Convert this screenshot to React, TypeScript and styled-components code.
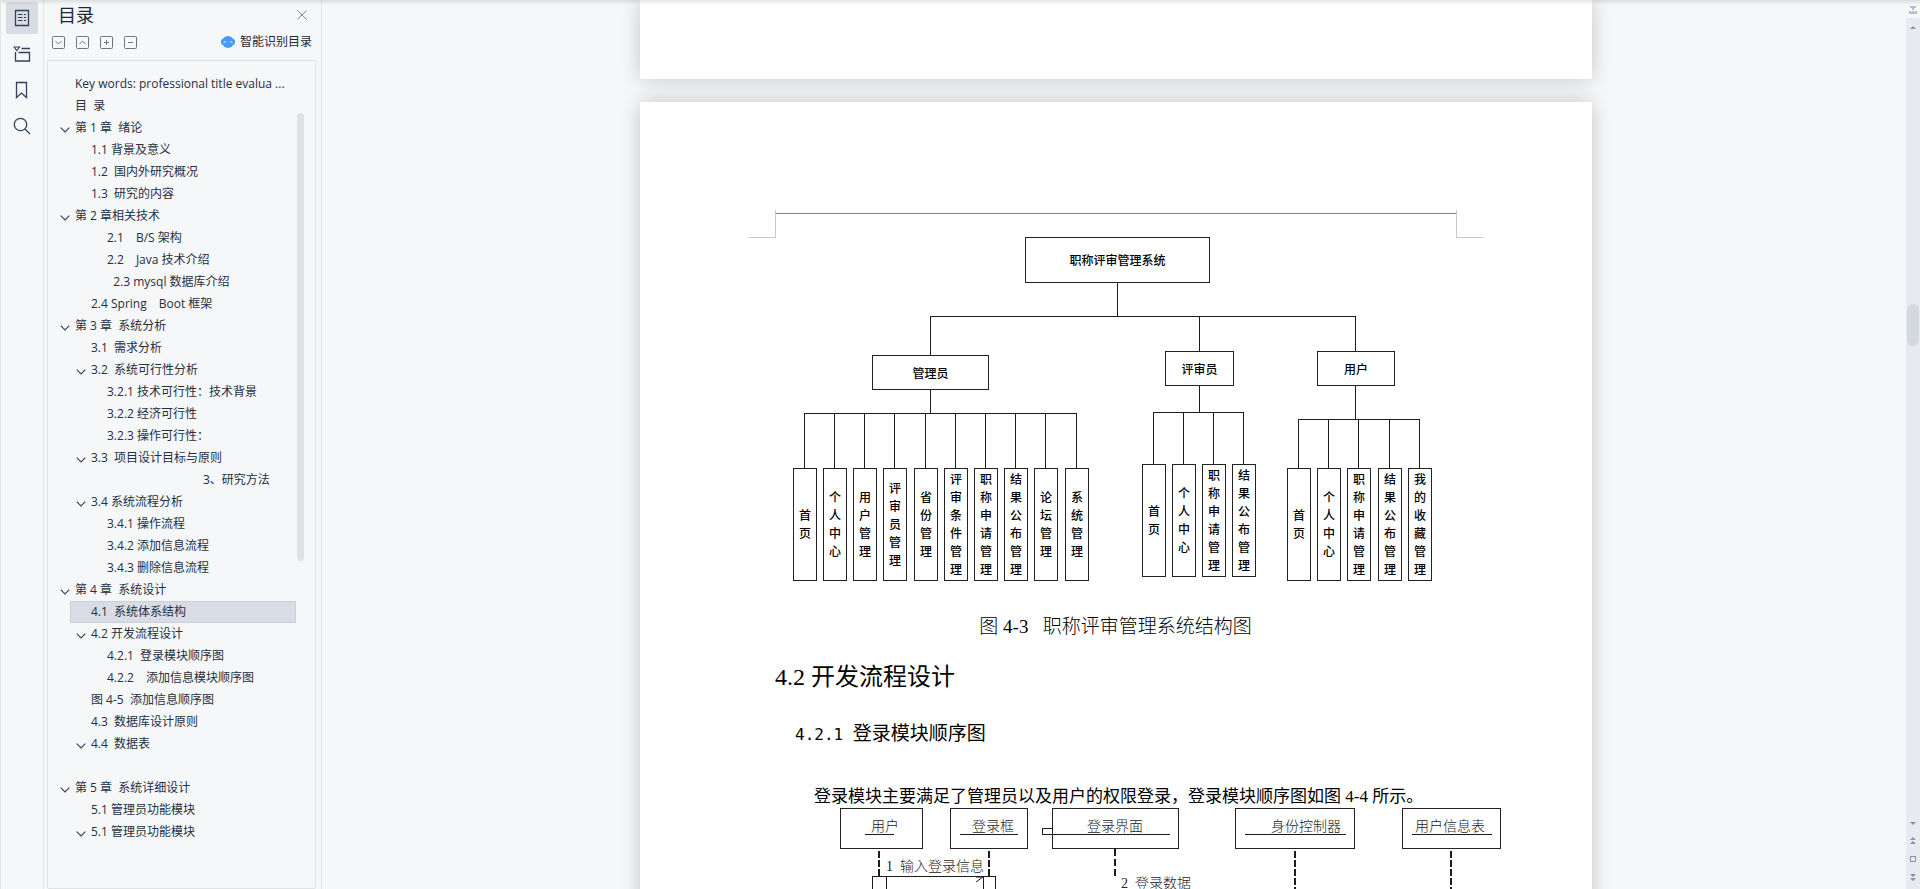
import React from "react";
import styled, { createGlobalStyle } from "styled-components";

const GlobalStyle = createGlobalStyle`
  * { box-sizing: border-box; }
  html, body, #root { height: 100%; }
  body {
    margin: 0;
    background: #f5f7f9;
    color: #262f3f;
    font-family: "Open Sans", "Noto Sans CJK SC", sans-serif;
    font-size: 12px;
  }
  h1, h2, h3, p, ul, figure { margin: 0; padding: 0; font-weight: 400; }
  ul { list-style: none; }
  button { border: 0; padding: 0; background: none; color: inherit; font: inherit; cursor: pointer; }
  svg { display: block; }
`;

const Shell = styled.div`
  position: relative;
  display: flex;
  height: 100vh;
  overflow: hidden;
  border-left: 1px solid #e2e4e8;

  &::after {
    content: "";
    position: absolute;
    inset: 0 0 auto;
    height: 5px;
    background: linear-gradient(rgba(0, 0, 0, 0.1), rgba(0, 0, 0, 0));
    pointer-events: none;
  }
`;

/* ---------- left rail ---------- */

const Rail = styled.nav`
  display: flex;
  flex: none;
  flex-direction: column;
  gap: 4px;
  width: 43px;
  padding: 2px 5px;
  border-right: 1px solid #e2e4e8;
`;

const RailButton = styled.button<{ $active?: boolean }>`
  display: grid;
  place-items: center;
  width: 32px;
  height: 32px;
  border-radius: 2px;
  background: ${(p) => (p.$active ? "#d8dde4" : "transparent")};
`;

/* ---------- contents panel ---------- */

const Panel = styled.aside`
  display: flex;
  flex: none;
  flex-direction: column;
  width: 278px;
  padding: 0 5px 0 3px;
  border-right: 1px solid #e2e4e8;
`;

const PanelHeader = styled.header`
  display: flex;
  align-items: center;
  justify-content: space-between;
  height: 30px;
  padding: 0 9px 0 11px;
`;

const PanelTitle = styled.h1`
  font-size: 18px;
  line-height: 30px;
  color: #1f2733;
`;

const PanelTools = styled.div`
  display: flex;
  align-items: center;
  gap: 11px;
  height: 24px;
  margin-bottom: 6px;
  padding: 0 4px 0 5px;
`;

const ToolButton = styled.button`
  width: 13px;
  height: 13px;
`;

const SmartButton = styled.button`
  display: flex;
  align-items: center;
  gap: 5px;
  margin-left: auto;
  line-height: 24px;
  color: #1f2733;
`;

const TreeFrame = styled.div`
  display: flex;
  flex: 1;
  min-height: 0;
  padding: 12px 11px 0 6px;
  border: 1px solid #e0e3e6;
  border-radius: 2px;
`;

const Tree = styled.ul`
  flex: 1;
  min-width: 0;
  overflow: hidden;
`;

const TreeRow = styled.li<{ $level: number; $current?: boolean }>`
  display: flex;
  align-items: center;
  height: 22px;
  margin-left: ${(p) => p.$level * 16}px;
  margin-right: 1px;
  border: 1px solid ${(p) => (p.$current ? "#c9d0d9" : "transparent")};
  background: ${(p) => (p.$current ? "#d8dde5" : "transparent")};
`;

const ChevronSlot = styled.button`
  display: flex;
  flex: none;
  justify-content: center;
  width: 20px;
  padding-top: 3px;
`;

const Spacer = styled.span`
  flex: none;
  width: 20px;
`;

const TreeLink = styled.a`
  overflow: hidden;
  color: inherit;
  line-height: 20px;
  text-decoration: none;
  text-overflow: ellipsis;
  white-space: pre;
`;

const TreeScroll = styled.div`
  flex: none;
  width: 7px;
  height: 448px;
  margin-top: 40px;
  border-radius: 4px;
  background: #dfe2e4;
`;

/* ---------- document ---------- */

const Desk = styled.main`
  display: flex;
  flex: 1;
  flex-direction: column;
  align-items: center;
  gap: 23px;
  min-width: 0;
  padding-left: 4px;
  overflow: hidden;
`;

const Sheet = styled.article`
  flex: none;
  width: 952px;
  padding: 108px 136px 96px 135px;
  background: #fff;
  box-shadow: 0 0 20px rgba(0, 0, 0, 0.2);
  color: #000;
  font-family: "Liberation Serif", "Noto Sans CJK SC", serif;
`;

const SheetTail = styled(Sheet)`
  height: 79px;
  padding: 0;
`;

const HeaderRule = styled.div`
  display: grid;
  grid-template-columns: 28px 1fr 28px;
  height: 28px;
  margin: 0 -28px -1px -27px;
`;

const Corner = styled.span<{ $side: "left" | "right" }>`
  border-bottom: 1px solid #c8c8c8;
  border-${(p) => (p.$side === "left" ? "right" : "left")}: 1px solid #c8c8c8;
`;

const Rule = styled.span`
  height: 1px;
  margin-top: 3px;
  background: #808080;
`;

const Chart = styled.figure<{ $height: number }>`
  position: relative;
  height: ${(p) => p.$height}px;
`;

const Wires = styled.svg`
  position: absolute;
  inset: 0;
  overflow: visible;
  fill: none;
  stroke: #1c1c1c;
  shape-rendering: crispEdges;
`;

const Box = styled.div<{ $x: number; $y: number; $w: number; $h: number }>`
  position: absolute;
  left: ${(p) => p.$x}px;
  top: ${(p) => p.$y}px;
  display: flex;
  align-items: center;
  justify-content: center;
  width: ${(p) => p.$w}px;
  height: ${(p) => p.$h}px;
  border: 1px solid #222;
  background: #fff;
  font-size: 12px;
  font-weight: 500;
`;

const Leaf = styled(Box)`
  line-height: 18px;

  span { width: 12px; word-break: break-all; }
`;

const Actor = styled(Box)<{ $pad: number }>`
  align-items: flex-start;
  justify-content: flex-start;
  padding-left: ${(p) => p.$pad}px;
  background: none;
  color: #222;
  font-size: 14px;
  font-weight: 300;
  line-height: 36px;
`;

const Message = styled.span<{ $x: number; $y: number }>`
  position: absolute;
  left: ${(p) => p.$x}px;
  top: ${(p) => p.$y}px;
  color: #222;
  font-size: 14px;
  font-weight: 300;
  line-height: 20px;
  white-space: pre;
`;

const Caption = styled.p`
  font-size: 19px;
  font-weight: 300;
  line-height: 40px;
  text-align: center;
  white-space: pre;
`;

const Section = styled.h2`
  margin-top: 10px;
  font-size: 24px;
  line-height: 40px;
`;

const Subsection = styled.h3`
  margin-top: 17px;
  padding-left: 20px;
  font-size: 19px;
  line-height: 40px;
  white-space: pre;
`;

const Digits = styled.span`
  font-family: "DejaVu Sans Mono", monospace;
  font-size: 16px;
  line-height: 1;
`;

const Paragraph = styled.p`
  margin-top: 31px;
  padding-left: 39px;
  font-size: 17px;
  line-height: 23px;
  white-space: nowrap;
`;

/* ---------- page scroll bar ---------- */

const ScrollColumn = styled.div`
  display: flex;
  flex: none;
  flex-direction: column;
  width: 14px;
`;

const RulerToggle = styled.button`
  display: grid;
  place-items: center;
  height: 18px;
  padding-top: 2px;
`;

const Track = styled.div`
  display: flex;
  flex: 1;
  flex-direction: column;
  align-items: center;
  padding: 8px 0;
  background: #e8eaef;
`;

const TrackSpace = styled.div<{ $grow: number }>`
  flex: ${(p) => p.$grow} 1 0;
`;

const Thumb = styled.div`
  flex: none;
  width: 12px;
  height: 42px;
  border-radius: 6px;
  background: #d4d8df;
`;

const GlyphButton = styled.button`
  display: block;
`;

const JumpButtons = styled.div`
  display: flex;
  flex-direction: column;
  gap: 12px;
  padding-top: 12px;
`;

/* ---------- data ---------- */

type Entry = { text: string; level: number; open?: boolean; current?: boolean };

const entries: Entry[] = [
  { text: "Key words: professional title evalua ...", level: 0 },
  { text: "目  录", level: 0 },
  { text: "第 1 章  绪论", level: 0, open: true },
  { text: "1.1 背景及意义", level: 1 },
  { text: "1.2  国内外研究概况", level: 1 },
  { text: "1.3  研究的内容", level: 1 },
  { text: "第 2 章相关技术", level: 0, open: true },
  { text: "2.1\u3000B/S 架构", level: 2 },
  { text: "2.2\u3000Java 技术介绍", level: 2 },
  { text: "  2.3 mysql 数据库介绍", level: 2 },
  { text: "2.4 Spring\u3000Boot 框架", level: 1 },
  { text: "第 3 章  系统分析", level: 0, open: true },
  { text: "3.1  需求分析", level: 1 },
  { text: "3.2  系统可行性分析", level: 1, open: true },
  { text: "3.2.1 技术可行性：技术背景", level: 2 },
  { text: "3.2.2 经济可行性", level: 2 },
  { text: "3.2.3 操作可行性：", level: 2 },
  { text: "3.3  项目设计目标与原则", level: 1, open: true },
  { text: "\u3000\u3000\u3000\u3000\u3000\u3000\u3000\u30003、研究方法", level: 2 },
  { text: "3.4 系统流程分析", level: 1, open: true },
  { text: "3.4.1 操作流程", level: 2 },
  { text: "3.4.2 添加信息流程", level: 2 },
  { text: "3.4.3 删除信息流程", level: 2 },
  { text: "第 4 章  系统设计", level: 0, open: true },
  { text: "4.1  系统体系结构", level: 1, current: true },
  { text: "4.2 开发流程设计", level: 1, open: true },
  { text: "4.2.1  登录模块顺序图", level: 2 },
  { text: "4.2.2\u3000添加信息模块顺序图", level: 2 },
  { text: "图 4-5  添加信息顺序图", level: 1 },
  { text: "4.3  数据库设计原则", level: 1 },
  { text: "4.4  数据表", level: 1, open: true },
  { text: "", level: 1 },
  { text: "第 5 章  系统详细设计", level: 0, open: true },
  { text: "5.1 管理员功能模块", level: 1 },
  { text: "5.1 管理员功能模块", level: 1, open: true },
];

type Branch = {
  name: string;
  x: number;
  y: number;
  w: number;
  stem: number;
  bar: number;
  leafTop: number;
  leaves: [string, number][];
};

const branches: Branch[] = [
  {
    name: "管理员", x: 97, y: 118, w: 117, stem: 155, bar: 176, leafTop: 231,
    leaves: [
      ["首页", 18], ["个人中心", 48], ["用户管理", 78], ["评审员管理", 108], ["省份管理", 139],
      ["评审条件管理", 169], ["职称申请管理", 199], ["结果公布管理", 229], ["论坛管理", 259], ["系统管理", 290],
    ],
  },
  {
    name: "评审员", x: 390, y: 114, w: 69, stem: 424, bar: 175, leafTop: 227,
    leaves: [["首页", 367], ["个人中心", 397], ["职称申请管理", 427], ["结果公布管理", 457]],
  },
  {
    name: "用户", x: 542, y: 114, w: 78, stem: 580, bar: 182, leafTop: 231,
    leaves: [["首页", 512], ["个人中心", 542], ["职称申请管理", 572], ["结果公布管理", 603], ["我的收藏管理", 633]],
  },
];

const actors = [
  { name: "用户", x: 65, w: 83, pad: 30, line: [90, 119] },
  { name: "登录框", x: 175, w: 78, pad: 21, line: [185, 243] },
  { name: "登录界面", x: 277, w: 127, pad: 34, line: [277, 395] },
  { name: "身份控制器", x: 460, w: 120, pad: 35, line: [470, 571] },
  { name: "用户信息表", x: 627, w: 99, pad: 12, line: [637, 717] },
];

/* ---------- icons ---------- */

const ink = { fill: "none", stroke: "#33415c", strokeWidth: 1.3 };

const OutlineIcon = () => (
  <svg width="16" height="18" viewBox="0 0 16 18" {...ink}>
    <path d="M1.500 1.500h13v15h-13z" />
    <path strokeWidth="1" d="M4 5.500h4.500M4 8.500h4.500M4 11.500h4.500M10 5.500h2M10 8.500h2M10 11.500h2" />
  </svg>
);

const ChapterIcon = () => (
  <svg width="18" height="16" viewBox="0 0 18 16" {...ink}>
    <path strokeWidth="1.100" d="M1 1h5.500L3.750 4.500z" />
    <path d="M8.500 2.500H17M2.500 6v9h14V6.500H5.500" />
  </svg>
);

const BookmarkIcon = () => (
  <svg width="14" height="18" viewBox="0 0 14 18" {...ink}>
    <path d="M1.500 1.500h10v15l-5-4.500-5 4.500z" />
  </svg>
);

const SearchIcon = () => (
  <svg width="18" height="18" viewBox="0 0 18 18" {...ink}>
    <circle cx="7.500" cy="7.500" r="6.200" />
    <path d="M12 12l5 5" />
  </svg>
);

const CloseIcon = () => (
  <svg width="10" height="10" viewBox="0 0 10 10" fill="none" stroke="#7d8699">
    <path d="M.5.5l9 9M9.500.5l-9 9" />
  </svg>
);

const SquareIcon = ({ d }: { d: string }) => (
  <svg width="13" height="13" viewBox="0 0 13 13" fill="none" stroke="#70757b">
    <rect x=".5" y=".5" width="12" height="12" rx="1" />
    <path d={d} />
  </svg>
);

const RobotIcon = () => (
  <svg width="14" height="12" viewBox="0 0 14 12">
    <ellipse cx="7" cy="6" rx="6" ry="6" fill="#4a9bf3" />
    <rect y="3" width="14" height="6" rx="2" fill="#4a9bf3" />
    <path d="M2.500 6.700l1.500-1.200 1 1M9 6.500l1-1 1.500 1.200" fill="none" stroke="#fff" />
  </svg>
);

const Chevron = () => (
  <svg width="10" height="6" viewBox="0 0 10 6" fill="none" stroke="#3a4558" strokeWidth="1.200">
    <path d="M.7.7L5 5 9.300.7" />
  </svg>
);

const Glyph = ({ d, h }: { d: string; h: number }) => (
  <svg width="6" height={h} viewBox={`0 0 6 ${h}`} fill="#8792ad">
    <path d={d} />
  </svg>
);

/* ---------- parts ---------- */

const tools = [
  { label: "展开", d: "M3.500 5l3 3 3-3" },
  { label: "收起", d: "M3.500 8l3-3 3 3" },
  { label: "添加", d: "M4 6.500h5M6.500 4v5" },
  { label: "减少", d: "M4 6.500h5" },
];

const ContentsPanel = () => (
  <Panel>
    <PanelHeader>
      <PanelTitle>目录</PanelTitle>
      <button aria-label="关闭"><CloseIcon /></button>
    </PanelHeader>
    <PanelTools>
      {tools.map((t) => (
        <ToolButton key={t.label} aria-label={t.label}><SquareIcon d={t.d} /></ToolButton>
      ))}
      <SmartButton><RobotIcon />智能识别目录</SmartButton>
    </PanelTools>
    <TreeFrame>
      <Tree>
        {entries.map((e, i) => (
          <TreeRow key={i} $level={e.level} $current={e.current}>
            {e.open ? <ChevronSlot aria-label="折叠"><Chevron /></ChevronSlot> : <Spacer />}
            {e.text && <TreeLink href="#">{e.text}</TreeLink>}
          </TreeRow>
        ))}
      </Tree>
      <TreeScroll />
    </TreeFrame>
  </Panel>
);

const branchWires = (b: Branch) => {
  const drops = b.leaves.map(([, x]) => x + 11);
  return (
    `M${b.stem} 79V${b.y}M${b.stem} ${b.y + 35}V${b.bar}` +
    `M${drops[0]} ${b.bar}H${drops[drops.length - 1] + 1}` +
    drops.map((x) => `M${x} ${b.bar}V${b.leafTop}`).join("")
  );
};

const StructureChart = () => (
  <Chart $height={370}>
    <Wires width="681" height="370">
      <path d="M342 46V79M155 79H581" />
      {branches.map((b) => <path key={b.name} d={branchWires(b)} />)}
    </Wires>
    <Box $x={250} $y={0} $w={185} $h={46}>职称评审管理系统</Box>
    {branches.map((b) => (
      <React.Fragment key={b.name}>
        <Box $x={b.x} $y={b.y} $w={b.w} $h={35}>{b.name}</Box>
        {b.leaves.map(([name, x]) => (
          <Leaf key={name} $x={x} $y={b.leafTop} $w={24} $h={113}><span>{name}</span></Leaf>
        ))}
      </React.Fragment>
    ))}
  </Chart>
);

const SequenceChart = () => (
  <Chart $height={320}>
    <Wires width="681" height="320">
      {actors.map((a) => <path key={a.name} d={`M${a.line[0]} 26H${a.line[1]}`} />)}
      <path d="M277 20H267V26H277" />
      <path d="M104 43V68M214 43V68M520 43V320M676 43V320" strokeWidth="2" strokeDasharray="7 2" />
      <path d="M340 41V68" strokeWidth="2" strokeDasharray="7 3" />
      <path d="M97 320V68H220V320M111 68V320M208 68V320" />
      <path d="M201 69H208L201 74" shapeRendering="auto" />
    </Wires>
    {actors.map((a) => (
      <Actor key={a.name} $x={a.x} $y={0} $w={a.w} $h={41} $pad={a.pad}>{a.name}</Actor>
    ))}
    <Message $x={111} $y={49}>{"1  输入登录信息"}</Message>
    <Message $x={346} $y={66}>{"2  登录数据"}</Message>
  </Chart>
);

const PageScroll = () => (
  <ScrollColumn>
    <RulerToggle aria-label="标尺">
      <svg width="8" height="8" viewBox="0 0 8 8" fill="#b4bdd2">
        <path d="M1 0h6v2H5v2H3V2H1zM0 5h2v1h1V5h2v1h1V5h2v3H0z" />
      </svg>
    </RulerToggle>
    <Track>
      <GlyphButton aria-label="向上滚动"><Glyph h={3} d="M3 0l3 3H0z" /></GlyphButton>
      <TrackSpace $grow={275} />
      <Thumb />
      <TrackSpace $grow={476} />
      <GlyphButton aria-label="向下滚动"><Glyph h={3} d="M0 0h6L3 3z" /></GlyphButton>
      <JumpButtons>
        <GlyphButton aria-label="上一页"><Glyph h={7} d="M3 0l3 3H0zM3 4l3 3H0z" /></GlyphButton>
        <GlyphButton aria-label="选择浏览对象"><Glyph h={6} d="M0 0h6v6H0zM1 1v4h4V1z" /></GlyphButton>
        <GlyphButton aria-label="下一页"><Glyph h={7} d="M0 0h6L3 3zM0 4h6L3 7z" /></GlyphButton>
      </JumpButtons>
    </Track>
  </ScrollColumn>
);

export default function App() {
  return (
    <>
      <GlobalStyle />
      <Shell>
        <Rail>
          <RailButton $active aria-label="目录"><OutlineIcon /></RailButton>
          <RailButton aria-label="章节"><ChapterIcon /></RailButton>
          <RailButton aria-label="书签"><BookmarkIcon /></RailButton>
          <RailButton aria-label="查找"><SearchIcon /></RailButton>
        </Rail>
        <ContentsPanel />
        <Desk>
          <SheetTail />
          <Sheet>
            <HeaderRule><Corner $side="left" /><Rule /><Corner $side="right" /></HeaderRule>
            <StructureChart />
            <Caption>{"图 4-3   职称评审管理系统结构图"}</Caption>
            <Section>4.2 开发流程设计</Section>
            <Subsection><Digits>4.2.1 </Digits>登录模块顺序图</Subsection>
            <Paragraph>登录模块主要满足了管理员以及用户的权限登录，登录模块顺序图如图 4-4 所示。</Paragraph>
            <SequenceChart />
          </Sheet>
        </Desk>
        <PageScroll />
      </Shell>
    </>
  );
}
